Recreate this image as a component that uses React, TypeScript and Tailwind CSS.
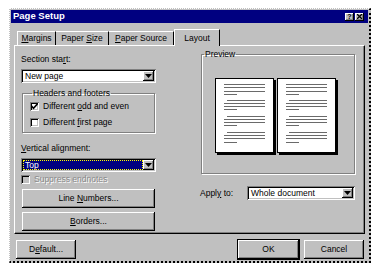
import React from "react";

const raised =
  "shadow-[inset_-1px_-1px_0_#000,inset_1px_1px_0_#fff,inset_-2px_-2px_0_#808080]";
const sunken =
  "shadow-[inset_1px_1px_0_#808080,inset_-1px_-1px_0_#fff,inset_2px_2px_0_#000,inset_-2px_-2px_0_#c0c0c0]";

function Arrow() {
  return (
    <div className={`w-[11px] h-full bg-[#c0c0c0] flex items-center justify-center ${raised}`}>
      <svg width="7" height="4" viewBox="0 0 7 4">
        <path d="M0 0h7L3.5 4z" fill="#000" />
      </svg>
    </div>
  );
}

function Select({ value, active = false, w }: { value: string; active?: boolean; w: string }) {
  return (
    <div className={`${w} h-[14px] bg-white p-[2px] flex ${sunken}`}>
      <div
        className={`flex-1 flex items-center pl-[2px] ${
          active ? "bg-[#000080] text-white outline-1 outline-dotted outline-[#ff0] -outline-offset-1" : "text-black"
        }`}
      >
        {value}
      </div>
      <Arrow />
    </div>
  );
}

function Check({ checked, label, disabled = false }: { checked: boolean; label: React.ReactNode; disabled?: boolean }) {
  return (
    <div className="flex items-center gap-[4px] h-[16px]">
      <div className={`w-[9px] h-[9px] ${disabled ? "bg-[#c0c0c0]" : "bg-white"} ${sunken} flex items-center justify-center`}>
        {checked && (
          <svg width="7" height="7" viewBox="0 0 7 7">
            <path d="M0.5 3l2 2.2L6.5 0.8" stroke="#000" strokeWidth="1.6" fill="none" />
          </svg>
        )}
      </div>
      <span className={disabled ? "text-[#8a8a8a] [text-shadow:1px_1px_0_#fff]" : ""}>{label}</span>
    </div>
  );
}

function Btn({ children, w, def = false }: { children: React.ReactNode; w: string; def?: boolean }) {
  return (
    <div
      className={`${w} h-[19px] flex items-center justify-center bg-[#c0c0c0] ${raised} ${
        def ? "outline-1 outline-black" : ""
      }`}
    >
      <span>{children}</span>
    </div>
  );
}

function Page() {
  const lines: [number, number, number][] = [
    [6, 9, 50], [9, 9, 50], [13, 9, 50], [16, 9, 22],
    [22, 12, 50], [25, 9, 50], [28, 9, 50], [31, 9, 22],
    [38, 12, 50], [41, 9, 50], [44, 9, 50], [47, 9, 22],
    [54, 12, 50], [57, 9, 50], [60, 9, 50], [64, 9, 22],
  ];
  return (
    <svg width="61" height="77" viewBox="0 0 61 77">
      <rect x="2" y="2" width="59" height="75" fill="#000" />
      <rect x="0.5" y="0.5" width="58" height="74" fill="#fff" stroke="#000" />
      {lines.map(([y, x1, x2], i) => (
        <line key={i} x1={x1} x2={x2} y1={y + 0.5} y2={y + 0.5} stroke="#6a6a6a" />
      ))}
    </svg>
  );
}

const tabs = [
  { w: "w-[39px] ml-[3px] border-l", label: <><span className="underline">M</span>argins</> },
  { w: "w-[53px]", label: <>Paper <span className="underline">S</span>ize</> },
  { w: "w-[65px]", label: <><span className="underline">P</span>aper Source</> },
];

export default function App() {
  return (
    <div className="w-[376px] h-[267px] bg-white pl-[9px] pt-[8px] font-['Liberation_Sans',Arial,sans-serif] text-[8.5px] text-black">
      <div className="w-[362px] h-[255px] bg-[#c0c0c0] border-t border-l border-white border-r-2 border-b-2 border-r-black border-b-black border-dotted flex flex-col">
        {/* title bar */}
        <div className="mx-[1px] mt-[1px] h-[13px] bg-[#000080] flex items-center justify-between pl-[2px] pr-[4px]">
          <span className="text-white font-bold text-[9.5px]">Page Setup</span>
          <div className="flex gap-[1px]">
            <div className={`w-[9px] h-[8px] bg-[#c0c0c0] ${raised} flex items-center justify-center text-[7px] font-bold leading-none`}>?</div>
            <div className={`w-[9px] h-[8px] bg-[#c0c0c0] ${raised} flex items-center justify-center`}>
              <svg width="5" height="5" viewBox="0 0 5 5">
                <path d="M0 0l5 5M5 0L0 5" stroke="#000" strokeWidth="1.3" />
              </svg>
            </div>
          </div>
        </div>

        {/* tabs */}
        <div className="ml-[4px] mt-[5px] flex items-end h-[17px]">
          {tabs.map((t, i) => (
            <div
              key={i}
              className={`${t.w} h-[14px] flex items-center justify-center border-t border-white border-r border-r-black`}
            >
              <span>{t.label}</span>
            </div>
          ))}
          <div className="w-[46px] h-[17px] -mb-[1px] relative z-10 bg-[#c0c0c0] flex items-center justify-center border-t border-l border-white border-r border-r-black">
            Layout
          </div>
        </div>

        {/* panel */}
        <div className="ml-[4px] w-[351px] h-[189px] border-t border-l border-white border-r border-b border-r-black border-b-black shadow-[inset_-1px_-1px_0_#808080] flex pl-[6px] pt-[3px]">
          <div className="w-[135px] flex flex-col pt-[5px]">
            <div className="h-[11px] flex items-center">
              <span>
                Section sta<span className="underline">r</span>t:
              </span>
            </div>
            <div className="mt-[4px]">
              <Select value="New page" w="w-[135px]" />
            </div>
            <fieldset className="mt-[5px] ml-[1px] w-[133px] h-[45px] border border-[#808080] shadow-[1px_1px_0_#fff,inset_1px_1px_0_#fff] pl-[7px]">
              <legend className="ml-[2px] px-[1px] leading-[10px]">Headers and footers</legend>
              <Check checked label={<>Different <span className="underline">o</span>dd and even</>} />
              <Check checked={false} label={<>Different <span className="underline">f</span>irst page</>} />
            </fieldset>
            <div className="mt-[10px] h-[11px] flex items-center">
              <span>
                <span className="underline">V</span>ertical alignment:
              </span>
            </div>
            <div className="mt-[4px]">
              <Select value="Top" active w="w-[135px]" />
            </div>
            <div className="h-[14px] -mt-[1px]">
              <Check checked={false} disabled label="Suppress endnotes" />
            </div>
            <div className="mt-[4px] ml-[1px]">
              <Btn w="w-[133px]">
                Line <span className="underline">N</span>umbers...
              </Btn>
            </div>
            <div className="mt-[4px] ml-[1px]">
              <Btn w="w-[133px]">
                <span className="underline">B</span>orders...
              </Btn>
            </div>
          </div>

          <div className="ml-[44px] flex flex-col">
            <fieldset className="ml-[1px] w-[154px] h-[125px] border border-[#808080] shadow-[1px_1px_0_#fff,inset_1px_1px_0_#fff] flex justify-center gap-[1px] pt-[19px] pr-[4px]">
              <legend className="ml-[2px] px-[1px] leading-[10px]">Preview</legend>
              <Page />
              <Page />
            </fieldset>
            <div className="mt-[12px] flex items-center">
              <span className="w-[47px]">
                Appl<span className="underline">y</span> to:
              </span>
              <Select value="Whole document" w="w-[108px]" />
            </div>
          </div>
        </div>

        {/* bottom buttons */}
        <div className="mt-[6px] ml-[6px] flex">
          <Btn w="w-[60px]">
            D<span className="underline">e</span>fault...
          </Btn>
          <div className="ml-[162px]">
            <Btn w="w-[61px]" def>
              OK
            </Btn>
          </div>
          <div className="ml-[5px]">
            <Btn w="w-[60px]">Cancel</Btn>
          </div>
        </div>
      </div>
    </div>
  );
}
